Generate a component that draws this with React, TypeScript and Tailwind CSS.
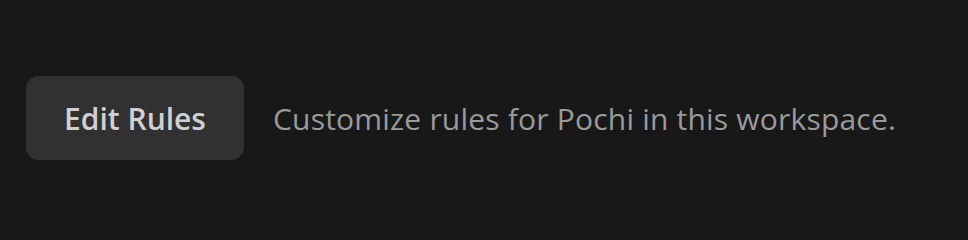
export default function App() {
  return (
    <div
      className="min-h-screen w-full bg-[#181818] pt-[76px] pl-[26px]"
      style={{ fontFamily: '"Open Sans", "Noto Sans", sans-serif' }}
    >
      <div className="flex items-center gap-[29px]">
        <button className="h-[84px] w-[218px] rounded-[13px] bg-[#313131] text-[30px] font-semibold text-[#d0d0d0]">
          Edit Rules
        </button>
        <p className="text-[30px] tracking-[0.2px] text-[#9a9a9a]">
          Customize rules for Pochi in this workspace.
        </p>
      </div>
    </div>
  );
}
